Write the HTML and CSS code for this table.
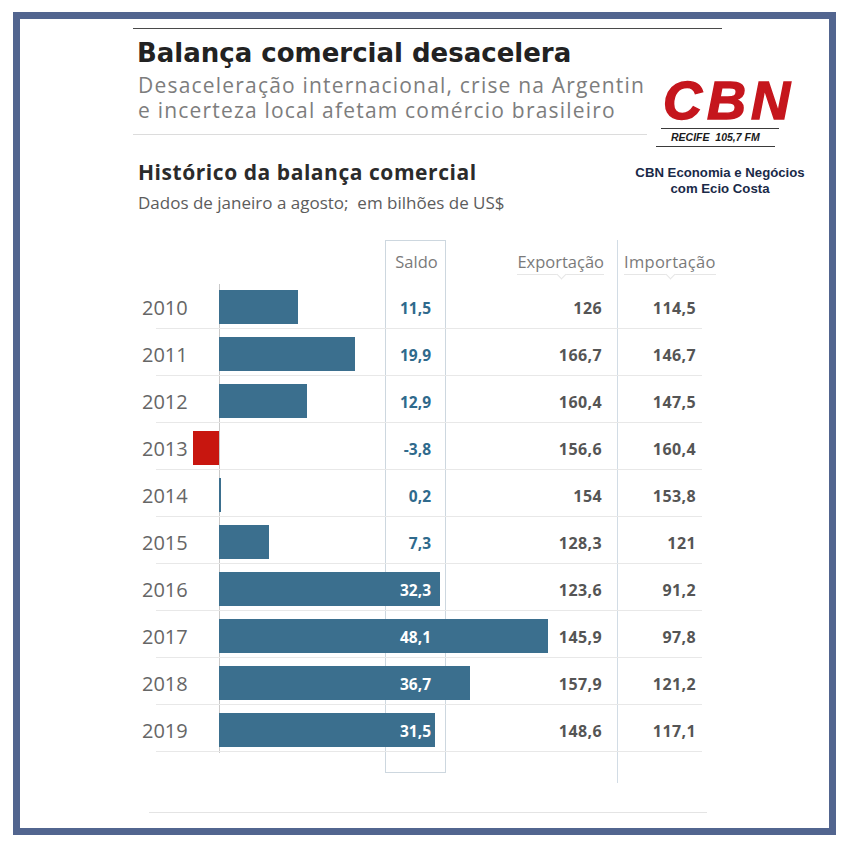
FILE: index.html
```html
<!DOCTYPE html>
<html lang="pt-BR">
<head>
<meta charset="utf-8">
<title>Balança comercial desacelera</title>
<link rel="stylesheet" href="styles.css">
</head>
<body>
<div class="frame">
  <div class="graphic">
    <h1 class="title">Balança comercial desacelera</h1>
    <p class="subtitle">Desaceleração internacional, crise na Argentin<br>e incerteza local afetam comércio brasileiro</p>
    <div class="sep"></div>
    <h2 class="chart-title">Histórico da balança comercial</h2>
    <p class="chart-sub">Dados de janeiro a agosto;&nbsp; em bilhões de US$</p>
    <div class="table">
      <div class="row head">
        <span class="h-saldo">Saldo</span>
        <span class="h-exp">Exportação</span>
        <span class="h-imp">Importação</span>
      </div>
      <div class="row">
        <span class="year">2010</span><span class="bar" style="width:78.7px"></span>
        <span class="saldo">11,5</span><span class="exp">126</span><span class="imp">114,5</span>
      </div>
      <div class="row">
        <span class="year">2011</span><span class="bar" style="width:136.1px"></span>
        <span class="saldo">19,9</span><span class="exp">166,7</span><span class="imp">146,7</span>
      </div>
      <div class="row">
        <span class="year">2012</span><span class="bar" style="width:88.2px"></span>
        <span class="saldo">12,9</span><span class="exp">160,4</span><span class="imp">147,5</span>
      </div>
      <div class="row">
        <span class="year">2013</span><span class="neg" style="width:26px"></span>
        <span class="saldo">-3,8</span><span class="exp">156,6</span><span class="imp">160,4</span>
      </div>
      <div class="row">
        <span class="year">2014</span><span class="bar" style="width:1.6px"></span>
        <span class="saldo">0,2</span><span class="exp">154</span><span class="imp">153,8</span>
      </div>
      <div class="row">
        <span class="year">2015</span><span class="bar" style="width:49.9px"></span>
        <span class="saldo">7,3</span><span class="exp">128,3</span><span class="imp">121</span>
      </div>
      <div class="row">
        <span class="year">2016</span><span class="bar" style="width:220.9px"></span>
        <span class="saldo on">32,3</span><span class="exp">123,6</span><span class="imp">91,2</span>
      </div>
      <div class="row">
        <span class="year">2017</span><span class="bar" style="width:329px"></span>
        <span class="saldo on">48,1</span><span class="exp">145,9</span><span class="imp">97,8</span>
      </div>
      <div class="row">
        <span class="year">2018</span><span class="bar" style="width:251px"></span>
        <span class="saldo on">36,7</span><span class="exp">157,9</span><span class="imp">121,2</span>
      </div>
      <div class="row">
        <span class="year">2019</span><span class="bar" style="width:215.5px"></span>
        <span class="saldo on">31,5</span><span class="exp">148,6</span><span class="imp">117,1</span>
      </div>
    </div>
    <div class="footline"></div>
  </div>

  <div class="logo">
    <div class="cbn">CBN</div>
    <div class="logo-rule rule-top"></div>
    <div class="freq">RECIFE  105,7 FM</div>
    <div class="logo-rule rule-bottom"></div>
    <p class="caption">CBN Economia e Negócios<br>com Ecio Costa</p>
  </div>
</div>
</body>
</html>
```

FILE: styles.css
```css
html, body {
  margin: 0;
  padding: 0;
  background: #ffffff;
}

.frame {
  position: relative;
  box-sizing: border-box;
  width: 823px;
  height: 823px;
  margin: 12px 0 0 13px;
  padding: 9px 0 0 113px;
  border: 7px solid #52658f;
  background: #ffffff;
}

.graphic {
  width: 589px;
  border-top: 1px solid #4a4a4a;
}

.title {
  margin: 9px 0 0 4px;
  font: 700 26px/30px "DejaVu Sans", sans-serif;
  color: #222222;
}

.subtitle {
  margin: 5px 0 0 5px;
  font: 400 21px/25px "Open Sans", sans-serif;
  letter-spacing: 1.2px;
  color: #7d7d7d;
  white-space: nowrap;
}

.sep {
  margin-top: 11px;
  width: 514px;
  height: 1px;
  background: #dcdcdc;
}

.chart-title {
  margin: 25px 0 0 5px;
  font: 700 21px/24px "Open Sans", sans-serif;
  letter-spacing: 0.55px;
  color: #2b2b2b;
}

.chart-sub {
  margin: 9px 0 0 5px;
  font: 400 17px/20px "Open Sans", sans-serif;
  color: #5c5c5c;
}

.table {
  margin-top: 27px;
  padding-bottom: 31px;
  background:
    linear-gradient(#cdd7df, #cdd7df) 252px 0 / 1px 533px no-repeat,
    linear-gradient(#cdd7df, #cdd7df) 312px 0 / 1px 533px no-repeat,
    linear-gradient(#cdd7df, #cdd7df) 252px 0 / 61px 1px no-repeat,
    linear-gradient(#cdd7df, #cdd7df) 252px 532px / 61px 1px no-repeat,
    linear-gradient(#d2dce5, #d2dce5) 484px 0 / 1px 543px no-repeat,
    linear-gradient(#c9c9c9, #c9c9c9) 86px 44px / 1px 469px no-repeat;
}

.row {
  display: grid;
  grid-template-columns: 86px 166px 61px 171px 105px;
  grid-template-rows: 1fr;
  align-items: center;
  box-sizing: border-box;
  height: 47px;
  padding-top: 5px;
  background: linear-gradient(#e8e8e8, #e8e8e8) 23px 100% / 546px 1px no-repeat;
}

.row > * {
  grid-row: 1;
}

.row.head {
  height: 42px;
  padding-top: 0;
  align-items: start;
  background: none;
}

.h-saldo,
.h-exp,
.h-imp {
  margin-top: 12px;
  font: 400 16.5px/20px "Open Sans", sans-serif;
  color: #7a7a7a;
}

.h-saldo {
  grid-column: 3;
  justify-self: center;
  padding-left: 2px;
}

.h-exp,
.h-imp {
  position: relative;
  padding-bottom: 2px;
  border-bottom: 1px solid #e6e6e6;
}

.h-exp {
  grid-column: 4;
  justify-self: end;
  margin-right: 13px;
}

.h-imp {
  grid-column: 5;
  justify-self: start;
  margin-left: 7px;
  letter-spacing: 0.3px;
}

.h-exp::after,
.h-imp::after {
  content: "";
  position: absolute;
  left: 50%;
  bottom: -4px;
  width: 6px;
  height: 6px;
  margin-left: -3px;
  border-right: 1px solid #e6e6e6;
  border-bottom: 1px solid #e6e6e6;
  background: #ffffff;
  transform: rotate(45deg);
}

.year {
  grid-column: 1;
  padding-left: 9px;
  font: 400 20px/24px "Open Sans", sans-serif;
  color: #666666;
}

.bar {
  grid-column: 2 / 6;
  align-self: start;
  margin-top: 3px;
  height: 34px;
  background: #3b6f8e;
}

.neg {
  grid-column: 1;
  justify-self: end;
  align-self: start;
  margin-top: 3px;
  height: 34px;
  background: #c8160f;
}

.saldo {
  grid-column: 3;
  justify-self: end;
  padding-right: 15px;
  font: 700 15.5px/20px "Open Sans", sans-serif;
  color: #2f6a8c;
}

.saldo.on {
  color: #ffffff;
}

.exp,
.imp {
  justify-self: end;
  font: 700 16px/20px "Open Sans", sans-serif;
  letter-spacing: 0.4px;
  color: #555555;
}

.exp {
  grid-column: 4;
  padding-right: 15px;
}

.imp {
  grid-column: 5;
  padding-right: 26px;
}

.footline {
  margin: 29px 0 0 16px;
  width: 558px;
  height: 1px;
  background: #e4e4e4;
}

/* CBN logo overlay */
.logo {
  position: absolute;
  left: 610px;
  top: 61px;
  width: 180px;
}

.cbn {
  margin-left: 33px;
  font: italic 700 54px/40px "Liberation Sans", Arial, sans-serif;
  letter-spacing: 5px;
  color: #c5161d;
  -webkit-text-stroke: 1.5px #c5161d;
}

.logo-rule {
  height: 1px;
  background: #3a3a3a;
}

.rule-top {
  margin: 8px 0 0 31px;
  width: 118px;
}

.freq {
  margin: 1px 0 0 41px;
  font: italic 700 10.5px/14px "Liberation Sans", Arial, sans-serif;
  color: #1a1a1a;
  white-space: pre;
}

.rule-bottom {
  margin: 2px 0 0 26px;
  width: 119px;
}

.caption {
  margin: 18px 0 0;
  text-align: center;
  font: 700 13.2px/16px "Liberation Sans", Arial, sans-serif;
  color: #1a2a48;
}
```
